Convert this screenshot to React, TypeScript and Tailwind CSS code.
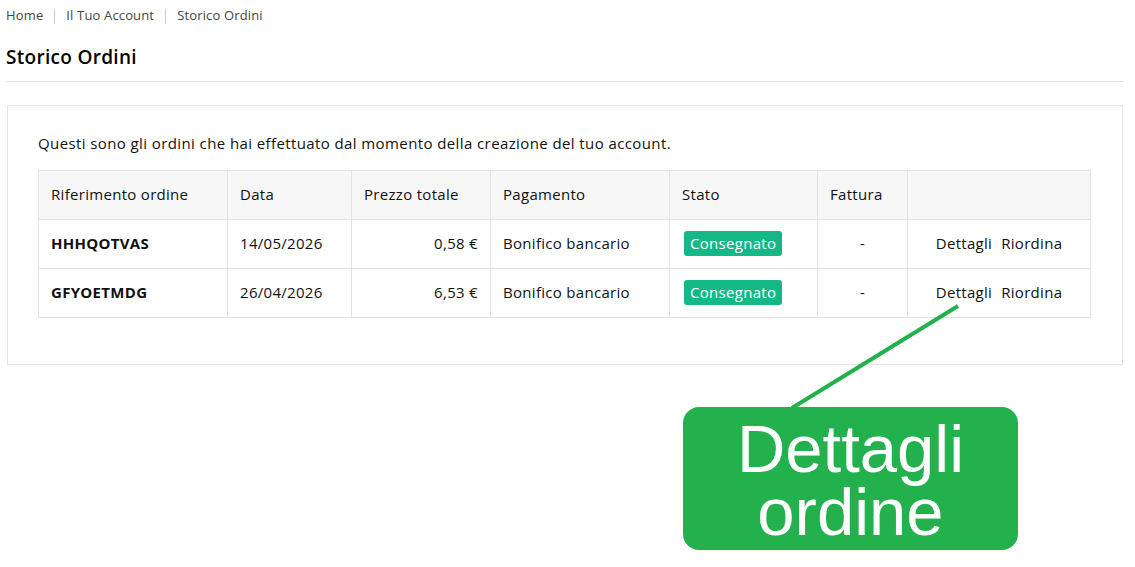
import React from "react";

interface Order {
  ref: string;
  date: string;
  total: string;
  payment: string;
  status: string;
}

const ORDERS: Order[] = [
  { ref: "HHHQOTVAS", date: "14/05/2026", total: "0,58 €", payment: "Bonifico bancario", status: "Consegnato" },
  { ref: "GFYOETMDG", date: "26/04/2026", total: "6,53 €", payment: "Bonifico bancario", status: "Consegnato" },
];

const FONT = { fontFamily: '"Open Sans", "Liberation Sans", sans-serif' };

export default function App() {
  return (
    <div className="relative h-[567px] w-[1135px] overflow-hidden bg-white text-[#111]" style={FONT}>
      {/* breadcrumb */}
      <nav className="flex h-[32px] items-center px-[6px] text-[13px] tracking-[0.15px] text-[#444]">
        <span>Home</span>
        <span className="mx-[11px] h-[15px] w-px bg-[#ccc]" />
        <span>Il Tuo Account</span>
        <span className="mx-[11px] h-[15px] w-px bg-[#ccc]" />
        <span>Storico Ordini</span>
      </nav>

      <div className="mx-[6px] flex h-[50px] w-[1118px] items-center border-b border-[#e3e3e3] pt-[1px]">
        <h1 className="text-[19px] font-semibold tracking-[0.3px] text-black">Storico Ordini</h1>
      </div>

      <div className="ml-[7px] mt-[23px] w-[1116px] border border-[#e5e5e5] px-[30px] pb-[46px] pt-[26px]">
        <p className="text-[15px] tracking-[0.4px]">
          Questi sono gli ordini che hai effettuato dal momento della creazione del tuo account.
        </p>

        <table className="mt-[15px] w-[1053px] border-collapse text-[15px] tracking-[0.3px]">
          <thead>
            <tr className="h-[49px] bg-[#f7f7f7] text-left">
              <th className="w-[189px] border border-[#e3e3e3] px-3 font-normal">Riferimento ordine</th>
              <th className="w-[124px] border border-[#e3e3e3] px-3 font-normal">Data</th>
              <th className="w-[139px] border border-[#e3e3e3] px-3 font-normal">Prezzo totale</th>
              <th className="w-[179px] border border-[#e3e3e3] px-3 font-normal">Pagamento</th>
              <th className="w-[148px] border border-[#e3e3e3] px-3 font-normal">Stato</th>
              <th className="w-[90px] border border-[#e3e3e3] px-3 font-normal">Fattura</th>
              <th className="border border-[#e3e3e3] px-3 font-normal" />
            </tr>
          </thead>
          <tbody>
            {ORDERS.map((o) => (
              <tr key={o.ref} className="h-[49px]">
                <td className="border border-[#e3e3e3] px-3 font-bold">{o.ref}</td>
                <td className="border border-[#e3e3e3] px-3">{o.date}</td>
                <td className="border border-[#e3e3e3] px-3 text-right">{o.total}</td>
                <td className="border border-[#e3e3e3] px-3">{o.payment}</td>
                <td className="border border-[#e3e3e3] px-[14px]">
                  <span className="inline-block rounded-[3px] bg-[#14b887] px-[6px] py-[1px] text-white">
                    {o.status}
                  </span>
                </td>
                <td className="border border-[#e3e3e3] px-3 text-center">-</td>
                <td className="border border-[#e3e3e3] px-3 text-center">
                  <a className="mr-[9px]">Dettagli</a>
                  <a>Riordina</a>
                </td>
              </tr>
            ))}
          </tbody>
        </table>
      </div>

      {/* annotation */}
      <svg className="pointer-events-none absolute left-0 top-0" width="1135" height="567">
        <line x1="958" y1="306" x2="792" y2="408" stroke="#22b14c" strokeWidth="4" />
      </svg>
      <div
        className="absolute left-[683px] top-[407px] flex h-[143px] w-[335px] items-center justify-center rounded-[16px] bg-[#22b14c] pt-[3px] text-center text-[67px] leading-[63px] text-white"
        style={{ fontFamily: '"Liberation Sans", Arial, sans-serif' }}
      >
        <p>
          Dettagli
          <br />
          ordine
        </p>
      </div>
    </div>
  );
}
